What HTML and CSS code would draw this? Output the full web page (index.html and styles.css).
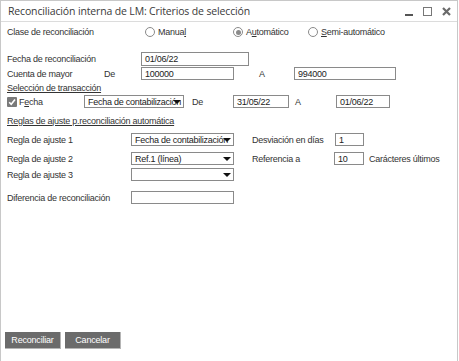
FILE: index.html
```html
<!DOCTYPE html>
<html lang="es">
<head>
<meta charset="utf-8">
<title>Reconciliación interna de LM</title>
<link rel="stylesheet" href="styles.css">
</head>
<body>
<div class="window">
  <div class="titlebar">
    <span class="title">Reconciliación interna de LM: Criterios de selección</span>
    <div class="controls">
      <span class="ctl-min"></span>
      <span class="ctl-max"></span>
      <svg class="ctl-close" width="9" height="9" viewBox="0 0 9 9"><path d="M1 1 L8 8 M8 1 L1 8" stroke="#6a6a6a" stroke-width="2.2"/></svg>
    </div>
  </div>
  <div class="content">
    <div class="row r-clase">
      <span class="lbl w-clase">Clase de reconciliación</span>
      <span class="radio w-manual"><span class="dot"></span><span>Manua<u>l</u></span></span>
      <span class="radio w-auto"><span class="dot on"></span><span>A<u>u</u>tomático</span></span>
      <span class="radio"><span class="dot"></span><span><u>S</u>emi-automático</span></span>
    </div>
    <div class="row r-fecharec">
      <span class="lbl w-134">Fecha de reconciliación</span>
      <span class="field w-108">01/06/22</span>
    </div>
    <div class="row r-cuenta">
      <span class="lbl w-97">Cuenta de mayor</span>
      <span class="lbl w-37">De</span>
      <span class="field w-93">100000</span>
      <span class="lbl w-a1">A</span>
      <span class="field w-102">994000</span>
    </div>
    <div class="row r-sel">
      <span class="link">Selección de transacción</span>
    </div>
    <div class="row r-fecha">
      <span class="check"><svg width="8" height="8" viewBox="0 0 8 8"><path d="M1.2 4.3 L3.2 6.3 L7 1.5" fill="none" stroke="#fff" stroke-width="1.6"/></svg></span>
      <span class="lbl w-65">F<u>e</u>cha</span>
      <span class="select w-100">Fecha de contabilización<span class="arrow"></span></span>
      <span class="lbl w-de2">De</span>
      <span class="field w-56">31/05/22</span>
      <span class="lbl w-a2">A</span>
      <span class="field w-54">01/06/22</span>
    </div>
    <div class="row r-reglas">
      <span class="link">Reglas de ajuste p.reconciliación automática</span>
    </div>
    <div class="row r-regla1">
      <span class="lbl w-124">Regla de ajuste 1</span>
      <span class="select w-103">Fecha de contabilización<span class="arrow"></span></span>
      <span class="lbl w-desv">Desviación en días</span>
      <span class="field w-29">1</span>
    </div>
    <div class="row r-regla2">
      <span class="lbl w-124">Regla de ajuste 2</span>
      <span class="select w-103">Ref.1 (línea)<span class="arrow"></span></span>
      <span class="lbl w-ref">Referencia a</span>
      <span class="field w-30">10</span>
      <span class="lbl w-car">Carácteres últimos</span>
    </div>
    <div class="row r-regla3">
      <span class="lbl w-124">Regla de ajuste 3</span>
      <span class="select w-103"><span class="arrow"></span></span>
    </div>
    <div class="row r-dif">
      <span class="lbl w-124">Diferencia de reconciliación</span>
      <span class="field w-103"></span>
    </div>
  </div>
  <div class="footer">
    <button class="btn">Reconciliar</button>
    <button class="btn">Cancelar</button>
  </div>
</div>
</body>
</html>
```
FILE: styles.css
```css
* { box-sizing: border-box; }
html, body { margin: 0; padding: 0; background: #fff; }
body {
  font-family: "Liberation Sans", Arial, sans-serif;
  font-size: 9px;
  letter-spacing: -0.25px;
  color: #333;
}
.window {
  width: 458px;
  height: 361px;
  border: 1px solid #c8c8c8;
  border-bottom: none;
  display: flex;
  flex-direction: column;
  background: #fff;
}
.titlebar {
  height: 21px;
  border-bottom: 1px solid #dcdcdc;
  display: flex;
  align-items: center;
  justify-content: space-between;
  padding: 0 6px 0 7px;
  flex-shrink: 0;
}
.title {
  font-family: "Open Sans", "Liberation Sans", sans-serif;
  font-size: 10.5px;
  letter-spacing: -0.15px;
  color: #3a3a3a;
}
.controls {
  display: flex;
  align-items: center;
  gap: 10px;
}
.ctl-min {
  width: 8px;
  height: 9px;
  border-bottom: 2px solid #555;
}
.ctl-max {
  width: 9px;
  height: 9px;
  border: 1.5px solid #777;
}
.content {
  display: flex;
  flex-direction: column;
  padding: 0 0 0 6px;
}
.row {
  display: flex;
  align-items: center;
  height: 13px;
  white-space: nowrap;
}
.r-clase { height: 20px; }
.r-fecharec { margin-top: 10px; height: 14px; }
.r-cuenta { margin-top: 1px; }
.r-sel { margin-top: 1px; }
.r-fecha { margin-top: 1px; }
.r-reglas { margin-top: 6px; }
.r-regla1 { margin-top: 6px; }
.r-regla2 { margin-top: 6px; }
.r-regla3 { margin-top: 3px; }
.r-dif { margin-top: 10px; }

.lbl { display: inline-block; flex-shrink: 0; }
.w-clase { width: 138px; }
.w-134 { width: 134px; }
.w-97 { width: 97px; }
.w-37 { width: 37px; }
.w-a1 { width: 35px; margin-left: 25px; }
.w-65 { width: 65px; }
.w-de2 { width: 41px; margin-left: 8px; }
.w-a2 { width: 41px; margin-left: 6px; }
.w-124 { width: 124px; }
.w-desv { width: 83px; margin-left: 18px; }
.w-ref { width: 82px; margin-left: 18px; }
.w-car { margin-left: 5px; }

.link { text-decoration: underline; }

.field, .select {
  display: inline-flex;
  align-items: center;
  height: 13px;
  border: 1px solid #8a8a8a;
  background: #fff;
  padding: 0 3px;
  color: #222;
  flex-shrink: 0;
  overflow: hidden;
  position: relative;
}
.r-fecharec .field { height: 14px; }
.select { padding-right: 10px; }
.arrow {
  position: absolute;
  right: 2px;
  top: 4px;
  width: 0;
  height: 0;
  border-left: 4px solid transparent;
  border-right: 4px solid transparent;
  border-top: 4px solid #111;
}
.w-108 { width: 108px; }
.w-93 { width: 93px; }
.w-102 { width: 102px; }
.w-100 { width: 100px; }
.w-56 { width: 56px; }
.w-54 { width: 54px; }
.w-103 { width: 103px; }
.w-29 { width: 29px; }
.w-30 { width: 30px; }

.radio { display: inline-flex; align-items: center; gap: 3px; }
.w-manual { width: 88px; }
.w-auto { width: 75px; }
.dot {
  width: 10px;
  height: 10px;
  border: 1px solid #8a8a8a;
  border-radius: 50%;
  background: #fff;
  position: relative;
  flex-shrink: 0;
}
.dot.on::after {
  content: "";
  position: absolute;
  left: 1.5px;
  top: 1.5px;
  width: 5px;
  height: 5px;
  border-radius: 50%;
  background: #8a8a8a;
}
.check {
  width: 10px;
  height: 10px;
  background: #7a7a7a;
  border-radius: 1px;
  display: inline-flex;
  align-items: center;
  justify-content: center;
  margin-right: 2px;
  flex-shrink: 0;
}
.check svg { display: block; }

.footer {
  margin-top: auto;
  padding: 0 0 12px 4px;
  display: flex;
  gap: 4px;
}
.btn {
  width: 56px;
  height: 17px;
  background: #6b6b6b;
  color: #fff;
  border: none;
  border-bottom: 1px solid #b5b5b5;
  border-right: 1px solid #b5b5b5;
  font-family: "Liberation Sans", sans-serif;
  font-size: 9px;
  letter-spacing: -0.2px;
  padding: 0;
  cursor: pointer;
}
```
